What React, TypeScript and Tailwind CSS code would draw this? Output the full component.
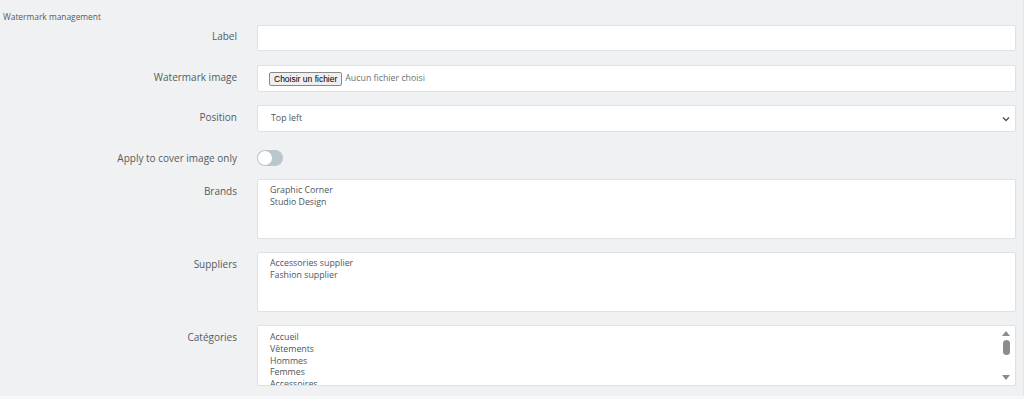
import React from "react"

const font = { fontFamily: "'Open Sans', 'Noto Sans', sans-serif" }

function Row({ label, top = "pt-[5px]", children }: { label: string; top?: string; children: React.ReactNode }) {
  return (
    <div className="flex items-start">
      <div className={`w-[237px] shrink-0 text-right text-[10px] leading-[14px] text-[#555b61] ${top}`}>{label}</div>
      <div className="ml-[20px] flex-1">{children}</div>
    </div>
  )
}

function Box({ className = "", children }: { className?: string; children?: React.ReactNode }) {
  return (
    <div className={`rounded-[2px] border border-[#dde2e5] bg-white ${className}`}>{children}</div>
  )
}

export default function App() {
  return (
    <div className="h-[399px] w-[1024px] overflow-hidden bg-[#eff1f2]" style={font}>
      <div className="h-[396px] border-r border-[#e3e6e8] pr-[7px]">
        <div className="pl-[3px] pt-[11px] text-[8.4px] leading-[12px] text-[#555b61]">Watermark management</div>
        <div className="mt-[2px] flex flex-col">
          <Row label="Label" top="pt-[4px]">
            <Box className="h-[26px]" />
          </Row>

          <div className="mt-[14px]">
            <Row label="Watermark image" top="pt-[5px]">
              <Box className="flex h-[27px] items-center pl-[11px]">
                <span
                  className="rounded-[2px] border border-[#8a8a8a] bg-[#efefef] px-[4px] text-[8.5px] leading-[12px] text-black"
                  style={{ fontFamily: "'Liberation Sans', Arial, sans-serif" }}
                >
                  Choisir un fichier
                </span>
                <span className="ml-[3px] text-[8.8px] text-[#6c7177]">Aucun fichier choisi</span>
              </Box>
            </Row>
          </div>

          <div className="mt-[13px]">
            <Row label="Position" top="pt-[5px]">
              <Box className="flex h-[27px] items-center justify-between pl-[13px] pr-[4px]">
                <span className="text-[8.8px] text-[#4f555b]">Top left</span>
                <svg width="10" height="10" viewBox="0 0 10 10">
                  <path d="M2 3.5 L5 6.5 L8 3.5" fill="none" stroke="#4f555b" strokeWidth="1.4" />
                </svg>
              </Box>
            </Row>
          </div>

          <div className="mt-[18px]">
            <Row label="Apply to cover image only" top="pt-[1px]">
              <div className="relative h-[16px] w-[26px] rounded-full bg-[#b9c6cb]">
                <div className="absolute left-[1px] top-[1px] h-[14px] w-[14px] rounded-full bg-white" />
              </div>
            </Row>
          </div>

          <div className="mt-[13px]">
            <Row label="Brands" top="pt-[5px]">
              <Box className="h-[60px] px-[12px] pt-[4px] text-[8.8px] leading-[12px] text-[#4f555b]">
                <div>Graphic Corner</div>
                <div>Studio Design</div>
              </Box>
            </Row>
          </div>

          <div className="mt-[13px]">
            <Row label="Suppliers" top="pt-[5px]">
              <Box className="h-[60px] px-[12px] pt-[4px] text-[8.8px] leading-[12px] text-[#4f555b]">
                <div>Accessories supplier</div>
                <div>Fashion supplier</div>
              </Box>
            </Row>
          </div>

          <div className="mt-[13px]">
            <Row label="Catégories" top="pt-[5px]">
              <Box className="relative h-[61px] overflow-hidden">
                <div className="px-[12px] pt-[6px] text-[8.8px] leading-[11.8px] text-[#4f555b]">
                  <div>Accueil</div>
                  <div>Vêtements</div>
                  <div>Hommes</div>
                  <div>Femmes</div>
                  <div>Accessoires</div>
                </div>
                <div className="absolute right-[4px] top-0 flex h-full w-[10px] flex-col items-center justify-between py-[4px]">
                  <svg width="8" height="6" viewBox="0 0 8 6">
                    <path d="M0 6 L4 1 L8 6 Z" fill="#8c8c8c" />
                  </svg>
                  <div className="mb-auto mt-[4px] h-[15px] w-[7px] rounded-full bg-[#8c8c8c]" />
                  <svg width="8" height="6" viewBox="0 0 8 6">
                    <path d="M0 0 L4 5 L8 0 Z" fill="#8c8c8c" />
                  </svg>
                </div>
              </Box>
            </Row>
          </div>
        </div>
      </div>
      <div className="h-[3px] bg-[#f6f7f8]" />
    </div>
  )
}
